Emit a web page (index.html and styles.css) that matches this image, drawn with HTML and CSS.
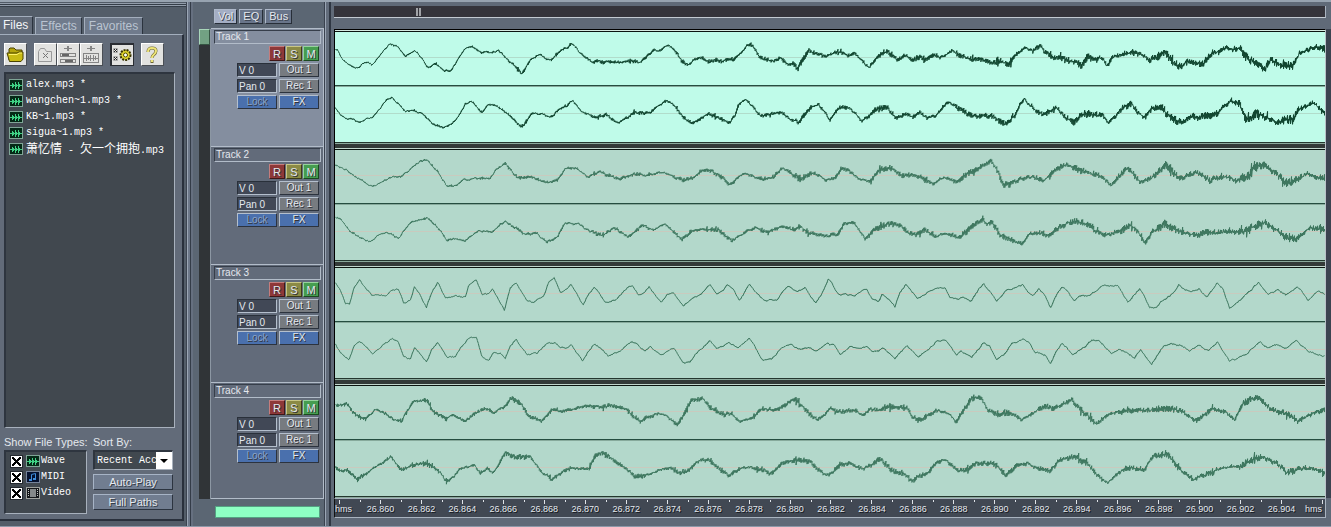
FILE: index.html
```html
<!DOCTYPE html>
<html lang="en">
<head>
<meta charset="utf-8">
<title>Multitrack</title>
<link rel="stylesheet" href="styles.css">
</head>
<body>
<svg class="defs" aria-hidden="true">
  <symbol id="wave" viewBox="0 0 14 12"><rect width="14" height="12" fill="#7fa596"/><rect x="1" y="1" width="12" height="10" fill="#052a17"/><path d="M1 6.500h12M3.500 4v5M4.500 5v3M6.500 3v7M7.500 5v3M9.500 3v7M10.500 5v3" stroke="#3fd385" fill="none"/></symbol>
  <symbol id="midi" viewBox="0 0 14 12"><rect width="14" height="12" fill="#75839b"/><rect x="1" y="1" width="12" height="10" fill="#06122f"/><path d="M5.500 8V3.500l4-1V7" stroke="#3f8ddd" fill="none"/><path d="M3 8h3v2H3zM7 7h3v2H7z" fill="#3f8ddd"/></symbol>
  <symbol id="video" viewBox="0 0 14 12"><rect width="14" height="12" fill="#a0a39f"/><rect x="1" y="1" width="12" height="10" fill="#15171a"/><rect x="4" y="2" width="6" height="8" fill="#85898a"/><path d="M2.500 2v8M11.500 2v8" stroke="#c5c8c5" stroke-dasharray="1 1"/></symbol>
</svg>
<div class="app">
  <aside class="organizer">
    <nav class="tabs">
      <button class="tab active">Files</button>
      <button class="tab">Effects</button>
      <button class="tab">Favorites</button>
    </nav>
    <div class="pane">
      <div class="toolbar">
        <button class="tool" aria-label="Open"><svg viewBox="0 0 20 20"><path d="M4 15V4l1-1h4l2 2h6v3" fill="#b5a50c" stroke="#4b4300"/><path d="M4.500 16.500 2 8h10l2-1h4v7l-2 2.500z" fill="#c9bb14" stroke="#4b4300"/><path d="M4 9.500h8l2-1.500h3" stroke="#fff36b" fill="none"/></svg></button>
        <button class="tool gap" aria-label="Close"><svg viewBox="0 0 20 20" fill="none" stroke="#999"><path d="M3.500 16.500v-10l2-3h4l2 3h5v10z"/><path d="M8 8l5 5M13 8l-5 5" stroke="#777"/></svg></button>
        <button class="tool" aria-label="Insert"><svg viewBox="0 0 20 20" fill="none" stroke="#858585" shape-rendering="crispEdges"><path d="M6 3.500h8M9.500 1v5M10.500 1v5"/><path d="M2.500 8.500h15v3h-15zM2.500 14.500h15v3h-15z"/><path d="M4 10h7M7 16h8" stroke="#666" stroke-width="2"/></svg></button>
        <button class="tool" aria-label="Edit"><svg viewBox="0 0 20 20" fill="none" stroke="#858585" shape-rendering="crispEdges"><path d="M6 3.500h8M9.500 1v5M10.500 1v5M2.500 8.500h15v9h-15z"/><path d="M3 13h14M5.500 10v6M7.500 11v4M9.500 10v6M12.500 10v6M14.500 11v4"/></svg></button>
        <button class="tool gap pressed" aria-label="Options"><svg viewBox="0 0 20 20" fill="none"><path d="M1.500 3.500h4v4h-4zM1.500 11.500h4v4h-4z" stroke="#aaa"/><path d="M2 4l3 3M5 4 2 7M2 12l3 3M5 12l-3 3" stroke="#222"/><circle cx="13.500" cy="10" r="5" fill="#e0d52f" stroke="#393400" stroke-width="2" stroke-dasharray="2 1"/><circle cx="13.500" cy="10" r="2" fill="#fff" stroke="#514b00"/></svg></button>
        <button class="tool gap" aria-label="Help"><svg viewBox="0 0 20 20" fill="none"><path d="M6 7q0-4 4-4t4 3q0 2-2.500 4-1.500 1-1.500 3M10 15v3" stroke="#6b6430" stroke-width="3"/><path d="M6 7q0-4 4-4t4 3q0 2-2.500 4-1.500 1-1.500 3M10 15v2" stroke="#eee478" stroke-width="2"/></svg></button>
      </div>
      <ul class="files">
        <li><svg class="icon"><use href="#wave"/></svg>alex.mp3 *</li>
        <li><svg class="icon"><use href="#wave"/></svg>wangchen~1.mp3 *</li>
        <li><svg class="icon"><use href="#wave"/></svg>KB~1.mp3 *</li>
        <li><svg class="icon"><use href="#wave"/></svg>sigua~1.mp3 *</li>
        <li><svg class="icon"><use href="#wave"/></svg><span><span class="cjk">萧忆情</span> - <span class="cjk">欠一个拥抱</span>.mp3</span></li>
      </ul>
      <div class="filters">
        <div class="group">
          <span class="caption">Show File Types:</span>
          <div class="types">
            <label><input type="checkbox" checked><svg class="icon"><use href="#wave"/></svg>Wave</label>
            <label><input type="checkbox" checked><svg class="icon"><use href="#midi"/></svg>MIDI</label>
            <label><input type="checkbox" checked><svg class="icon"><use href="#video"/></svg>Video</label>
          </div>
        </div>
        <div class="group sort">
          <label class="caption" for="sort">Sort By:</label>
          <div class="picker">
            <select id="sort"><option>Recent Access</option></select>
            <span class="arrow"></span>
          </div>
          <button class="wide">Auto-Play</button>
          <button class="wide">Full Paths</button>
        </div>
      </div>
    </div>
  </aside>
  <section class="mixer">
    <div class="views">
      <button class="view on">Vol</button>
      <button class="view">EQ</button>
      <button class="view">Bus</button>
    </div>
    <div class="rack">
      <div class="scroll"><div class="thumb"></div></div>
      <div class="strips" id="strips"></div>
    </div>
    <div class="meter"></div>
  </section>
  <main class="session">
    <div class="overview"><div class="cursor"></div></div>
    <div class="lanes" id="lanes"></div>
    <div class="ruler" id="ruler"></div>
  </main>
</div>
<script src="waves.js"></script>
</body>
</html>
```
FILE: styles.css
```css
* { box-sizing: border-box; }
body {
  margin: 0;
  background: #5d6675;
  color: #e4e8ee;
  font: 10px/12px "Liberation Sans", Arial, sans-serif;
}
button, select, input { font: inherit; color: inherit; margin: 0; padding: 0; border-radius: 0; }
.defs { position: absolute; width: 0; height: 0; }
.app {
  display: grid;
  grid-template-columns: 193px 138px 1fr;
  min-height: 100vh;
  border-top: 2px solid #97a3b0;
  border-bottom: 1px solid #8d98a8;
}

.organizer {
  display: flex;
  flex-direction: column;
  padding: 14px 4px 5px 0;
  background:
    linear-gradient(90deg, #3b4350 1px, #9ba6b5 1px 2px, #6d788a 2px 4px, #343c48 4px 5px, #667080 5px) right 0 top 0 / 7px 100% no-repeat,
    linear-gradient(#515b67 1px, #929dab 1px 2px, #353e49 2px 3px, #929dab 3px 4px, #353e49 4px 5px) 0 0 / 186px 5px no-repeat,
    #535d69;
}
.tabs { display: flex; gap: 2px; align-items: flex-end; }
.tab {
  height: 17px;
  padding: 0 4px;
  border: 1px solid #a3aebd;
  border-right-color: #2b333e;
  border-bottom: 0;
  background: #707b8c;
  color: #bac4d1;
  font-size: 12px;
  line-height: 15px;
}
.tab.active { height: 18px; padding: 0 4px 0 3px; border-left: 0; background: #626b79; color: #f3f5f8; }
.pane {
  flex: 1;
  display: flex;
  flex-direction: column;
  width: 184px;
  padding: 8px 7px 5px 4px;
  border: 1px solid #a3aebd;
  border-left: 0;
  border-right: 2px solid #29303c;
  border-bottom: 2px solid #29303c;
  background: #626b79;
}
.toolbar { display: flex; height: 29px; }
.tool {
  width: 23px;
  height: 23px;
  background: #e2e2e0;
  border: 1px solid #fff;
  border-right-color: #4b4f55;
  border-bottom-color: #4b4f55;
}
.tool svg { display: block; width: 20px; height: 20px; }
.tool.gap { margin-left: 7px; }
.tool.pressed { width: 24px; border: 1px solid #2a2d33; border-width: 2px 1px 1px 2px; }
.files {
  flex: 1;
  margin: 0;
  padding: 3px 3px;
  list-style: none;
  border: 2px solid #2e353f;
  border-right: 1px solid #a8b1bd;
  border-bottom: 1px solid #a8b1bd;
  background: #41484f;
}
.files li { display: flex; align-items: center; gap: 3px; height: 16px; white-space: nowrap; color: #fff; }
.files, .types, .picker { font-family: "Liberation Mono", monospace; }
.cjk { font: 12px/12px "Noto Sans CJK SC", sans-serif; }
.icon { width: 14px; height: 12px; flex: none; }
.filters { display: grid; grid-template-columns: 83px 80px; gap: 6px; padding-top: 6px; }
.group { display: flex; flex-direction: column; }
.caption { height: 16px; font-size: 11px; line-height: 16px; white-space: nowrap; }
.types {
  padding: 1px 4px 12px;
  border: 2px solid #2e353f;
  border-right: 1px solid #a8b1bd;
  border-bottom: 1px solid #a8b1bd;
  background: #41484f;
  color: #fff;
}
.types label { display: flex; align-items: center; gap: 1px; height: 16px; }
.types input {
  appearance: none;
  width: 13px;
  height: 13px;
  margin-right: 2px;
  border: 2px solid #fff;
  outline: 1px solid #24292f;
  outline-offset: -1px;
  background: #fff;
}
.types input:checked {
  background:
    linear-gradient(45deg, transparent 42%, #000 42% 58%, transparent 58%),
    linear-gradient(-45deg, transparent 42%, #000 42% 58%, transparent 58%), #fff;
}
.picker {
  display: grid;
  grid-template-columns: 1fr 16px;
  height: 20px;
  border: 2px solid #2e353f;
  border-right: 1px solid #a8b1bd;
  border-bottom: 1px solid #a8b1bd;
  background: #41484f;
}
.picker select {
  grid-area: 1 / 1 / 2 / 2;
  min-width: 0;
  padding-left: 2px;
  appearance: none;
  border: 0;
  background: transparent;
  color: #fff;
  overflow: hidden;
}
.arrow { display: grid; place-items: center; background: #fff; }
.arrow::after { content: ""; border: 4px solid transparent; border-top-color: #000; border-bottom: 0; }
.wide {
  height: 16px;
  margin-top: 4px;
  border: 1px solid #a7b4c6;
  border-right-color: #2c3440;
  border-bottom-color: #2c3440;
  background: #717d90;
  font-size: 11px;
  line-height: 13px;
  text-shadow: 1px 1px #343c48;
}

.mixer {
  display: flex;
  flex-direction: column;
  padding: 7px 7px 0 6px;
  background:
    linear-gradient(90deg, #39414e 1px, #9aa5b4 1px 2px, #626c7b 2px 5px, #2f3743 5px 7px, #5f6c75 7px) right 0 top 0 / 7px 100% no-repeat,
    #5b6673;
}
.views { display: flex; gap: 2px; padding-left: 15px; height: 19px; }
.view {
  height: 15px;
  padding: 0 3px;
  border: 1px solid #aeb9ca;
  border-right-color: #272e38;
  border-bottom-color: #272e38;
  background: #69758a;
  font-size: 11px;
  line-height: 13px;
  text-shadow: 1px 1px #39414d;
}
.view.on { background: #a4aec4; }
.rack { display: grid; grid-template-columns: 12px 113px; }
.scroll { margin-top: 1px; background: #303437; border-right: 1px solid #8c97a3; }
.thumb { height: 16px; background: #72a183; border: 1px solid #a8d5b9; border-right-color: #355443; border-bottom-color: #355443; }
.strips { border-bottom: 1px solid #b2bcc9; }
.strip {
  height: 118px;
  padding: 1px 2px 0 3px;
  border-top: 1px solid #b2bcc9;
  border-right: 1px solid #b2bcc9;
  background: #626b7a;
}
.strip:last-child { height: 116px; }
.strip.selected { background: #848e9f; }
.title {
  height: 14px;
  padding-left: 1px;
  border: 1px solid #363e4a;
  border-right-color: #b2bcc9;
  border-bottom-color: #b2bcc9;
}
.controls { display: grid; grid-template-columns: 40px 40px; gap: 2px; justify-content: end; padding: 2px 2px 0 0; }
.keys { grid-column: 1 / -1; display: flex; justify-content: flex-end; gap: 1px; height: 15px; }
.key, .cell {
  border: 1px solid #b4bfcd;
  border-right-color: #2c333e;
  border-bottom-color: #2c333e;
  line-height: 12px;
  text-shadow: 1px 1px #30343a;
}
.key { width: 16px; font-size: 11px; }
.rec { background: #8e3838; border-color: #c47d7d #401717 #401717 #c47d7d; }
.solo { background: #8b8a45; border-color: #c8c686 #3c3b17 #3c3b17 #c8c686; }
.mute { background: #469d50; border-color: #96d29c #1b4a20 #1b4a20 #96d29c; }
.cell { height: 14px; background: #777b80; overflow: hidden; }
.field { width: 100%; padding-left: 1px; background: #414856; border-color: #29303a #b4bfcd #b4bfcd #29303a; text-shadow: none; }
.blue { background: #4a70ad; }
.lock { color: #8ba4ca; }
.meter { height: 12px; margin: 7px 4px 0 16px; background: #8effc4; border: 1px solid #54a182; }

.session { display: flex; flex-direction: column; padding: 4px 5px 8px 3px; background: #606a78; min-width: 0; }
.overview { height: 12px; padding: 2px 0 2px 82px; background: #35343b; border-right: 1px solid #a9b3c0; border-bottom: 1px solid #c3cad2; }
.cursor { width: 5px; height: 8px; background: linear-gradient(90deg, #a2a4a8 2px, #35343b 2px 3px, #a2a4a8 3px); }
.lanes { margin-top: 11px; border: 1px solid #000; border-width: 1px 0 0 1px; background: #3a424e; border-right: 1px solid #b9c0c8; box-shadow: 6px 0 #3b4350; }
.lanes::before { content: ""; display: block; height: 1px; background: #d5eae1; }
.lane { border-top: 1px solid #0c1511; border-bottom: 5px solid #333a38; box-shadow: inset 0 -1px #8ba99c; padding-bottom: 1px; }
.lane:not(:last-child) { position: relative; }
.lane:not(:last-child)::after { content: ""; position: absolute; inset: auto 0 -5px; height: 1px; background: #c1d6cc; }
.lane:last-child { border-bottom: 0; }
.channel { display: block; width: 100%; height: 53px; background: #b3d8cb; }
.channel + .channel { height: 58px; border-top: 1px solid #254d40; border-bottom: 1px solid #24372f; box-shadow: inset 0 1px #87aa9c; }
.lane.selected .channel { background: #bffbe9; }
.axis { stroke: #c9cabe; shape-rendering: crispEdges; }
.trace { fill: none; stroke: #3d765e; shape-rendering: crispEdges; }
.lane.selected .trace { stroke: #10452f; }
.lane.selected .axis { stroke: #b1dccb; }
.ruler {
  display: grid;
  grid-template-columns: 25px repeat(23, 1fr) 23px;
  height: 20px;
  padding-top: 1px;
  border: 1px solid #a9b3bf;
  border-left-color: #111;
  background: #414853;
  font-size: 9px;
  line-height: 19px;
  text-align: center;
  text-shadow: 1px 1px #15191f;
}
.tick { min-width: 0; white-space: nowrap; background: linear-gradient(#dfe3e8, #dfe3e8) center top / 1px 4px no-repeat, linear-gradient(#dfe3e8, #dfe3e8) left top / 1px 2px no-repeat; }
.unit { background: linear-gradient(#dfe3e8, #dfe3e8) 4px 0 / 1px 4px no-repeat; }
.unit:first-child { text-align: left; }
.unit:last-child { background-position: right 2px top 0; }
```
FILE: waves.js
```js
// Envelope points are stored at three units per pixel.
// Each section is [x shift, centre line, "x,y x,y ..."].
const tracks = [
  { name: "Track 1", noise: [0.8, 6.5], channels: [
    [[-15, 172, "15,150 22,148 30,165 42,180 60,195 80,202 88,198 100,186 112,188 123,195 140,175 160,150 175,132 187,132 205,142 225,168 240,158 250,150 262,156 275,175 290,198 305,196 318,190 325,196 340,212 360,211 375,190 385,172 402,150 425,139 440,147 458,158 470,156 480,160 503,150 515,160 530,178 550,195 573,220 585,205 605,176 630,163 645,172 662,181 680,160 700,148 712,145 723,129 735,140 750,158 770,174 788,190 800,183 820,187 850,184 880,186 905,180 930,183 950,168 970,148 985,153"],
     [975, 97, "0,78 25,60 45,75 65,108 85,120 105,103 125,100 145,110 170,104 190,104 220,104 240,86 255,68 265,57 280,62 297,96 315,100 340,107 362,98 385,120 400,115 414,130 430,100 445,78 470,87 495,92 520,85 540,80 560,92 585,85 605,105 628,128 645,105 665,82 685,78 700,95 715,108 735,92 755,102 780,95 800,102 820,90 840,95 860,90 875,75 890,85 915,95 940,107 970,102"],
     [1965, 172, "10,187 35,180 55,195 75,170 105,142 130,150 150,138 165,155 190,175 210,168 230,180 260,185 275,195 295,170 320,177 338,175 352,198 370,170 400,160 425,155 450,160 480,180 510,162 530,160 550,185 575,200 595,180 620,188 640,190 665,160 690,155 710,140 735,148 752,145 770,172 800,190 825,208 845,178 865,192 885,198 910,195 930,160 950,150 970,145 990,140 1008,145"]],
    [[-15, 343, "15,325 30,348 50,360 70,362 88,372 105,362 125,358 150,328 170,300 185,294 200,310 225,336 250,335 272,342 295,362 315,378 340,385 365,375 385,350 405,315 423,305 440,325 455,340 470,322 487,317 510,327 535,345 555,368 573,385 590,365 605,341 630,342 660,355 690,330 710,320 727,304 745,328 770,343 795,356 825,345 845,362 862,370 885,360 915,338 940,343 960,340 980,320"],
     [975, 268, "0,240 20,228 45,245 70,278 95,298 115,285 145,268 170,280 210,293 225,275 235,242 258,228 280,250 300,275 330,270 362,262 385,280 418,293 435,270 450,250 475,240 495,265 510,285 535,252 565,250 590,270 605,292 625,278 645,258 680,248 705,278 735,272 760,275 780,265 800,282 830,275 845,255 862,232 885,245 915,265 940,278 970,272"],
     [1965, 343, "10,350 30,368 50,378 75,350 90,315 103,300 120,320 145,340 165,345 200,325 225,352 255,368 275,345 310,345 340,350 355,370 380,350 400,325 425,315 445,340 465,352 490,325 520,325 545,360 580,368 605,352 630,355 660,350 685,345 700,320 725,305 750,312 768,360 800,345 835,355 860,370 885,362 910,362 925,330 950,320 970,310 985,325 1008,345"]]] },
  { name: "Track 2", noise: [0.8, 6.5], channels: [
    [[-15, 91, "15,58 50,75 80,100 125,122 140,120 175,97 215,93 245,68 270,48 290,45 325,82 350,123 370,125 400,105 435,100 480,98 500,70 523,57 540,72 560,96 600,97 625,103 650,115 685,100 705,68 740,70 775,95 805,82 835,90 870,102 910,88 950,90 1000,82 1030,95 1060,105 1090,100 1115,75 1145,75 1170,95 1200,118 1240,85 1300,102 1330,98 1355,68 1380,80 1415,102 1450,82 1470,90 1485,103"],
     [1485, 91, "0,103 15,97 35,70 55,75 80,97 120,110 150,75 180,70 215,90 250,85 290,105 310,118 340,97 380,108 420,82 455,65 485,48 505,85 520,118 540,118 570,100 610,95 640,108 680,72 715,60 750,75 790,85 820,97 845,122 865,95 893,68 930,110 965,98 1010,62 1045,95 1060,105 1070,95 1100,85 1140,105 1185,95 1220,105 1260,90 1275,65 1300,60 1330,75 1350,92 1368,115 1400,105 1430,85 1455,95 1488,100"]],
    [[-15, 262, "15,220 30,225 60,262 90,282 120,292 150,270 170,265 205,282 225,255 245,230 290,222 320,250 350,288 380,285 405,290 445,260 485,265 510,240 525,232 555,250 580,270 620,268 650,293 680,280 705,235 745,240 780,262 815,272 850,250 895,278 935,245 970,258 1003,238 1055,285 1085,262 1120,255 1165,258 1205,290 1240,265 1275,252 1310,265 1355,245 1390,257 1410,248 1440,270 1485,275"],
     [1485, 262, "0,273 25,272 45,235 75,238 105,282 130,260 170,240 210,245 235,265 260,272 285,258 320,275 350,268 390,280 430,245 460,225 470,240 485,230 515,275 545,285 575,300 600,265 630,265 655,275 690,245 740,232 780,245 820,272 860,265 900,245 925,265 948,298 970,260 1005,240 1040,255 1070,265 1100,270 1140,265 1190,262 1230,265 1275,245 1305,235 1340,255 1368,280 1400,285 1440,250 1488,255"]]] },
  { name: "Track 3", noise: [0.4, 0.6], channels: [
    [[-15, 445, "15,415 30,435 45,475 57,478 70,430 88,404 105,428 125,452 145,447 170,452 185,433 205,433 220,475 240,465 252,425 265,440 288,487 305,440 322,412 345,458 375,453 405,455 415,420 438,407 455,447 475,447 487,432 522,493 540,430 557,412 590,470 612,472 640,450 655,412 672,395 690,440 705,437 722,420 740,450 758,480 775,445 793,425 825,472 860,462 890,430 907,418 925,450 940,445 957,423 993,472 1010,448 1030,442 1060,480 1085,460 1110,450 1140,418 1160,447 1178,440 1192,418 1210,435 1228,467 1258,418 1275,437 1300,465 1340,465 1355,440 1375,425 1400,442 1425,428 1457,475 1475,445 1495,400"],
     [1485, 445, "0,405 25,447 50,448 75,455 90,442 110,432 125,460 145,470 157,445 172,457 195,485 210,440 228,415 245,440 262,460 285,450 305,435 345,425 360,457 380,460 400,455 425,468 445,435 460,415 480,440 500,470 525,437 550,430 580,418 592,438 610,453 628,430 645,450 662,487 680,450 698,427 715,440 732,467 755,452 780,453 820,420 865,423 895,472 912,450 930,430 945,455 960,490 980,485 1000,465 1020,455 1047,420 1065,435 1085,440 1110,430 1133,457 1163,412 1180,430 1200,490 1230,465 1265,435 1287,412 1315,447 1345,435 1370,450 1400,427 1415,432 1435,467 1465,437 1488,448"]],
    [[-15, 616, "15,600 30,625 55,650 70,610 88,590 110,612 128,630 155,605 185,583 203,592 220,640 240,645 252,612 270,630 288,655 305,615 322,595 350,640 375,638 395,605 415,583 438,580 455,640 475,648 490,622 510,628 525,642 540,605 557,585 590,630 620,628 650,600 675,593 690,610 705,612 722,600 758,650 775,620 793,597 835,635 870,622 885,605 907,592 945,620 960,608 993,632 1030,610 1060,658 1080,650 1105,620 1140,590 1160,615 1195,597 1225,612 1258,582 1275,610 1300,650 1325,645 1350,615 1380,600 1410,617 1435,607 1460,622 1480,605 1495,598"],
     [1485, 616, "0,603 10,600 32,630 60,608 85,612 110,607 130,627 160,613 195,645 230,605 265,638 290,620 320,590 345,585 380,632 395,622 425,642 460,595 480,607 500,647 520,635 545,600 580,587 600,600 615,622 645,632 662,657 680,620 697,597 730,632 765,610 785,588 810,592 845,627 870,615 915,640 932,617 965,660 1000,607 1020,597 1060,605 1080,617 1105,603 1135,620 1163,592 1200,650 1220,645 1250,630 1290,592 1315,610 1345,602 1370,612 1400,590 1435,622 1488,637"]]] },
  { name: "Track 4", noise: [3, 5], channels: [
    [[-15, 109, "15,90 50,88 75,118 105,130 135,105 165,115 190,135 212,140 235,100 250,80 290,77 310,110 345,128 370,123 405,140 435,112 465,98 490,112 520,97 545,67 570,85 600,125 635,137 665,105 700,107 745,98 780,92 810,97 840,92 885,97 905,120 930,138 985,115 1010,125 1040,148 1060,120 1085,72 1120,72 1145,100 1180,118 1205,115 1230,140 1270,125 1295,102 1345,105 1390,72 1415,90 1460,135 1485,120"],
     [1485, 109, "0,100 30,110 70,108 100,118 120,100 145,105 170,97 230,98 248,125 270,135 320,105 355,115 380,140 405,100 425,70 455,68 475,105 510,120 540,110 575,135 610,115 640,95 680,100 727,75 760,110 800,148 835,115 880,110 925,105 960,105 1020,97 1060,110 1100,138 1150,100 1190,112 1215,135 1240,85 1265,70 1295,70 1320,100 1370,115 1405,138 1440,120 1488,100"]],
    [[-15, 280, "15,280 30,292 50,285 80,315 110,297 145,272 182,250 212,290 240,275 290,268 325,292 347,320 370,310 390,285 430,275 450,298 470,282 488,298 525,238 560,250 600,250 640,300 665,315 700,292 730,280 775,285 795,245 815,232 845,255 880,275 915,308 960,302 985,287 1020,280 1045,297 1080,285 1100,262 1135,257 1165,280 1195,302 1235,280 1275,280 1325,300 1355,265 1395,258 1440,262 1470,290 1485,300"],
     [1485, 280, "0,300 30,272 65,268 100,287 150,255 190,290 225,298 248,318 295,295 320,265 345,257 385,287 405,290 440,265 490,268 530,305 560,275 595,265 630,285 660,292 690,258 735,248 775,268 800,300 835,325 870,295 895,280 945,287 970,245 1010,240 1045,280 1090,315 1135,300 1165,285 1195,278 1225,280 1255,262 1295,248 1340,265 1370,295 1400,285 1440,282 1488,297"]]] }
];

const WIDTH = 991;
let seed = 7;
function random() {
  seed = (seed * 16807) % 2147483647;
  return seed / 2147483647;
}

function readPoints(sections) {
  return sections.flatMap(([shift, centre, text]) =>
    text.split(" ").map(pair => {
      const [x, y] = pair.split(",").map(Number);
      return [(x + shift) / 3, (y - centre) / 3];
    })).sort((a, b) => a[0] - b[0]);
}

// One vertical stroke per pixel column, joined to the next column.
function tracePath(points, middle, [from, to]) {
  let d = "";
  let k = 0;
  let drift = 0;
  for (let x = 0; x < WIDTH; x++) {
    while (k < points.length - 2 && points[k + 1][0] <= x) k++;
    const [x0, y0] = points[k];
    const [x1, y1] = points[k + 1];
    const t = Math.max(0, Math.min(1, (x - x0) / (x1 - x0 || 1)));
    drift = drift * 0.7 + (random() - 0.5) * 1.3;
    const y = middle + y0 + (y1 - y0) * t + drift;
    const burst = 0.7 + 0.3 * Math.sin(x / 9) * Math.sin(x / 23);
    const amp = (from + (to - from) * x / WIDTH) * burst;
    const spike = random() > 0.93 ? 1.4 : 0.85;
    const up = y - amp * random() * spike;
    const down = y + amp * random() * spike;
    d += (x ? "L" : "M") + (x + 0.5) + " " + up.toFixed(1) + "V" + down.toFixed(1);
  }
  return d;
}

function channel(sections, noise, height, middle) {
  return `<svg class="channel" viewBox="0 0 ${WIDTH} ${height}" preserveAspectRatio="none">
    <path class="axis" d="M0 ${middle}H${WIDTH}"/>
    <path class="trace" d="${tracePath(readPoints(sections), middle, noise)}"/></svg>`;
}

document.getElementById("lanes").innerHTML = tracks.map((track, i) =>
  `<div class="lane${i ? "" : " selected"}">
    ${channel(track.channels[0], track.noise, 53, 25.5)}
    ${channel(track.channels[1], track.noise, 56, 27.5)}
  </div>`).join("");

document.getElementById("strips").innerHTML = tracks.map((track, i) =>
  `<div class="strip${i ? "" : " selected"}">
    <div class="title">${track.name}</div>
    <div class="controls">
      <div class="keys"><button class="key rec">R</button><button class="key solo">S</button><button class="key mute">M</button></div>
      <input class="cell field" aria-label="${track.name} volume" value="V 0"><button class="cell">Out 1</button>
      <input class="cell field" aria-label="${track.name} pan" value="Pan 0"><button class="cell">Rec 1</button>
      <button class="cell blue lock">Lock</button><button class="cell blue">FX</button>
    </div>
  </div>`).join("");

const labels = Array.from({ length: 23 }, (_, i) =>
  `<span class="tick">${(26.86 + i * 0.002).toFixed(3)}</span>`);
document.getElementById("ruler").innerHTML =
  `<span class="unit">hms</span>${labels.join("")}<span class="unit">hms</span>`;
```
